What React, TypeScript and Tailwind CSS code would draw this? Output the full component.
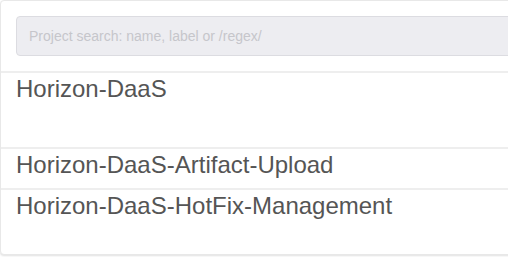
const PROJECTS: { name: string; height: string }[] = [
  { name: "Horizon-DaaS", height: "h-[76px]" },
  { name: "Horizon-DaaS-Artifact-Upload", height: "h-[41px]" },
  { name: "Horizon-DaaS-HotFix-Management", height: "h-[66px]" },
];

export default function App() {
  return (
    <div className="h-[257px] w-[508px] overflow-hidden bg-white font-['Liberation_Sans',Arial,sans-serif]">
      <div className="w-[540px] rounded-[4px] border border-[#e8e8e8] bg-white shadow-[0_1px_2px_rgba(0,0,0,0.12)]">
        <div className="p-[15px]">
          <input
            type="text"
            placeholder="Project search: name, label or /regex/"
            className="h-[40px] w-full rounded-[4px] border border-[#dcdce1] bg-[#ededf1] px-[12px] text-[14px] text-[#555] outline-none placeholder:text-[#c6c6cb]"
          />
        </div>
        {PROJECTS.map((p) => (
          <div key={p.name} className={`border-t-2 border-[#eeeeee] ${p.height}`}>
            <div className="pl-[15px] pt-[2px] text-[24px] leading-[28px] text-[#555555]">{p.name}</div>
          </div>
        ))}
      </div>
    </div>
  );
}
